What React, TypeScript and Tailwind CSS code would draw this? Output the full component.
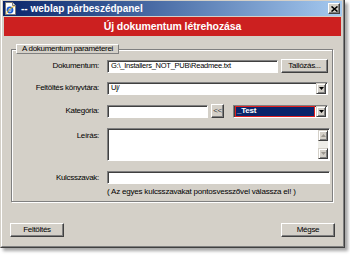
const Field = ({ value = '', className = '' }: { value?: string; className?: string }) => (
  <div
    className={`h-[13px] bg-white border border-t-[#808080] border-l-[#808080] border-r-white border-b-white shadow-[inset_1px_1px_0_#404040] flex items-center pl-[3px] text-[7.5px] tracking-[-0.25px] leading-none whitespace-nowrap overflow-hidden ${className}`}
  >
    {value}
  </div>
);

const Btn = ({ label, className = '' }: { label: string; className?: string }) => (
  <div
    className={`h-[14px] flex items-center justify-center text-[8px] tracking-[-0.3px] leading-none bg-[#d4d0c8] border border-t-white border-l-white border-r-[#404040] border-b-[#404040] shadow-[inset_-1px_-1px_0_#808080] ${className}`}
  >
    {label}
  </div>
);

const Arrow = ({ dir = 'down', muted = false }: { dir?: 'up' | 'down'; muted?: boolean }) => (
  <div className="w-[10px] h-[11px] shrink-0 bg-[#d4d0c8] border border-t-[#d4d0c8] border-l-[#d4d0c8] border-r-[#404040] border-b-[#404040] shadow-[inset_1px_1px_0_white,inset_-1px_-1px_0_#808080] flex items-center justify-center">
    <svg width="5" height="3" viewBox="0 0 5 3">
      <path d={dir === 'down' ? 'M0 0h5L2.5 3z' : 'M0 3h5L2.5 0z'} fill={muted ? '#9a968e' : '#000'} />
    </svg>
  </div>
);

const Select = ({ className = '', children }: { className?: string; children?: React.ReactNode }) => (
  <div
    className={`h-[13px] bg-white border border-t-[#808080] border-l-[#808080] border-r-white border-b-white shadow-[inset_1px_1px_0_#404040] flex items-center pl-[1px] pr-[1px] ${className}`}
  >
    <div className="flex-1 h-full flex items-center">{children}</div>
    <Arrow />
  </div>
);

const Label = ({ text, top = false }: { text: string; top?: boolean }) => (
  <div className={`w-[87px] shrink-0 text-right text-[8px] tracking-[-0.3px] leading-none ${top ? 'pt-[4px]' : ''}`}>{text}</div>
);

export default function App() {
  return (
    <div className="w-[350px] h-[256px] bg-white text-black font-['Liberation_Sans',Arial,sans-serif]">
      <div className="w-[345px] h-[248px] bg-[#d4d0c8] border-l border-r border-b border-l-[#d4d0c8] border-r-[#404040] border-b-[#404040] shadow-[3px_3px_3px_rgba(0,0,0,0.35)]">
        <div className="h-full flex flex-col border-l border-r border-b border-l-white border-r-[#808080] border-b-[#808080] pt-[1px] px-[1px] pb-[1px]">
          {/* title bar */}
          <div className="h-[15px] shrink-0 flex items-center pl-[1px] pr-[2px] bg-gradient-to-r from-[#0a246a] to-[#a6caf0]">
            <svg width="13" height="13" viewBox="0 0 13 13">
              <path d="M1.5 0.5h7l3 3v9h-10z" fill="#fff" stroke="#7a7a7a" />
              <path d="M8.5 0.5v3h3" fill="#e0e0e0" stroke="#7a7a7a" />
              <circle cx="6" cy="8" r="2.6" fill="none" stroke="#1d5fd1" strokeWidth="1.6" />
              <path d="M3.6 8h4.8" stroke="#1d5fd1" strokeWidth="1.2" />
              <path d="M2.5 11.5c2-4 5-6.5 8-7" fill="none" stroke="#f0b400" strokeWidth="0.9" />
            </svg>
            <span className="ml-[4px] text-[10px] font-bold text-white leading-none">-- weblap párbeszédpanel</span>
            <div className="ml-auto w-[12px] h-[11px] bg-[#d4d0c8] border border-t-white border-l-white border-r-[#404040] border-b-[#404040] shadow-[inset_-1px_-1px_0_#808080] flex items-center justify-center">
              <svg width="7" height="6" viewBox="0 0 7 6">
                <path d="M0.5 0.5l6 5M6.5 0.5l-6 5" stroke="#000" strokeWidth="1.6" />
              </svg>
            </div>
          </div>

          {/* red header */}
          <div className="mt-[1px] mx-[1px] h-[19px] shrink-0 bg-[#cc2020] flex items-center justify-center">
            <span className="text-[10.5px] font-bold tracking-[-0.1px] text-white leading-none">Új dokumentum létrehozása</span>
          </div>

          {/* parameters */}
          <fieldset className="mt-[8px] ml-[8px] w-[322px] border border-[#808080] shadow-[inset_1px_1px_0_white,1px_1px_0_white] pt-[5px] pb-[5px]">
            <legend className="ml-[4px] h-[10px] px-[5px] text-[8px] tracking-[-0.3px] leading-[8px] border border-t-white border-l-white border-r-[#808080] border-b-[#808080] bg-[#d4d0c8]">
              A dokumentum paraméterei
            </legend>

            <div className="flex items-center h-[14px]">
              <Label text="Dokumentum:" />
              <Field className="ml-[8px] w-[171px]" value="G:\_Installers_NOT_PUB\Readmee.txt" />
              <Btn className="ml-[3px] w-[47px]" label="Tallózás..." />
            </div>

            <div className="flex items-center h-[14px] mt-[8px]">
              <Label text="Feltöltés könyvtára:" />
              <Select className="ml-[8px] w-[221px]">
                <span className="pl-[2px] text-[7.5px] tracking-[-0.25px] leading-none">Uj/</span>
              </Select>
            </div>

            <div className="flex items-center h-[14px] mt-[9px]">
              <Label text="Kategória:" />
              <Field className="ml-[8px] w-[101px]" />
              <Btn className="ml-[3px] w-[13px] text-[#444]" label="<<" />
              <Select className="ml-[9px] w-[95px]">
                <div className="w-[80px] h-[11px] bg-[#0a246a] border border-[#e02020] flex items-center pl-[1px] text-[8px] font-bold tracking-[-0.2px] leading-none text-white">
                  _Test
                </div>
              </Select>
            </div>

            <div className="flex mt-[10px]">
              <Label text="Leírás:" top />
              <div className="ml-[8px] w-[223px] h-[33px] bg-white border border-t-[#808080] border-l-[#808080] border-r-white border-b-white shadow-[inset_1px_1px_0_#404040] flex justify-end p-[1px]">
                <div className="w-[10px] h-full flex flex-col bg-[#eeede8]">
                  <Arrow dir="up" muted />
                  <div className="flex-1" />
                  <Arrow dir="down" muted />
                </div>
              </div>
            </div>

            <div className="flex items-center h-[13px] mt-[10px]">
              <Label text="Kulcsszavak:" />
              <Field className="ml-[8px] w-[223px]" />
            </div>

            <div className="ml-[95px] mt-[3px] text-[8px] tracking-[-0.2px] leading-[9px] whitespace-nowrap">
              ( Az egyes kulcsszavakat pontosvesszővel válassza el! )
            </div>
          </fieldset>

          {/* buttons */}
          <div className="mt-[21px] pl-[7px] pr-[7px] flex justify-between">
            <Btn className="w-[54px]" label="Feltöltés" />
            <Btn className="w-[54px]" label="Mégse" />
          </div>
        </div>
      </div>
    </div>
  );
}
